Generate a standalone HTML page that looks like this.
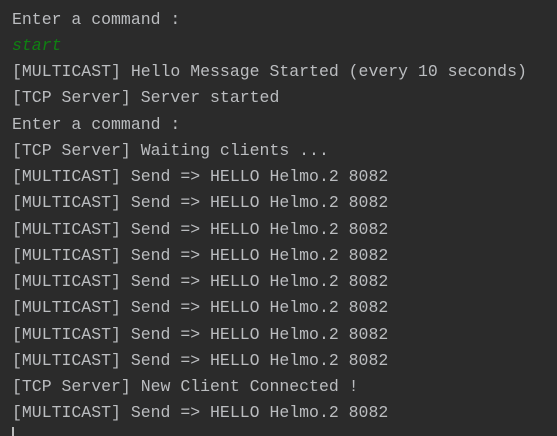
<!DOCTYPE html>
<html><head><style>
html,body{margin:0;padding:0;width:557px;height:436px;background:#2b2b2b;overflow:hidden}
pre{margin:0;position:absolute;left:12px;top:6.5px;font-family:"Liberation Mono",monospace;font-size:16.5px;line-height:26.27px;color:#bbbdc0;font-weight:normal}
.g{color:#0f8012;font-style:italic}
.cur{position:absolute;left:12px;top:427px;width:2px;height:9px;background:#bbbbbb}
</style></head><body>
<pre>Enter a command :
<span class="g">start</span>
[MULTICAST] Hello Message Started (every 10 seconds)
[TCP Server] Server started
Enter a command :
[TCP Server] Waiting clients ...
[MULTICAST] Send =&gt; HELLO Helmo.2 8082
[MULTICAST] Send =&gt; HELLO Helmo.2 8082
[MULTICAST] Send =&gt; HELLO Helmo.2 8082
[MULTICAST] Send =&gt; HELLO Helmo.2 8082
[MULTICAST] Send =&gt; HELLO Helmo.2 8082
[MULTICAST] Send =&gt; HELLO Helmo.2 8082
[MULTICAST] Send =&gt; HELLO Helmo.2 8082
[MULTICAST] Send =&gt; HELLO Helmo.2 8082
[TCP Server] New Client Connected !
[MULTICAST] Send =&gt; HELLO Helmo.2 8082</pre>
<div class="cur"></div>
</body></html>
